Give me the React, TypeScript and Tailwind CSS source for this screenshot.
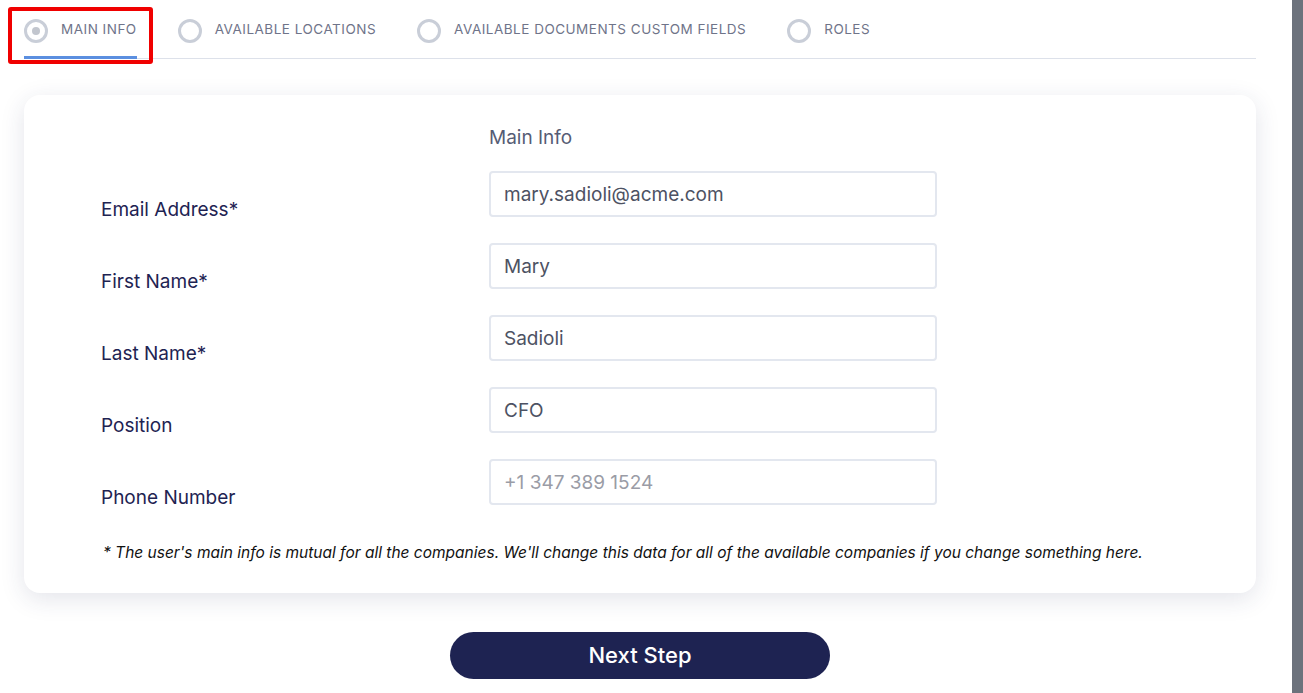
const tabs = [
  { label: 'Main Info', active: true },
  { label: 'Available Locations', active: false },
  { label: 'Available Documents Custom Fields', active: false },
  { label: 'Roles', active: false },
]

const fields = [
  { label: 'Email Address*', value: 'mary.sadioli@acme.com' },
  { label: 'First Name*', value: 'Mary' },
  { label: 'Last Name*', value: 'Sadioli' },
  { label: 'Position', value: 'CFO' },
  { label: 'Phone Number', value: '', placeholder: '+1 347 389 1524' },
]

export default function App() {
  return (
    <div className="flex h-screen overflow-hidden bg-white" style={{ fontFamily: "Inter, 'Noto Sans', sans-serif" }}>
      <main className="flex-1 pl-6 pr-9">

        {/* Steps */}
        <div className="flex gap-[41px] border-b border-[#dde1ea]">
          {tabs.map(tab => (
            <div key={tab.label}
              className={`relative -mb-px flex items-center gap-[13px] pt-[19px] pb-[13px] border-b-[3px] ${tab.active ? 'border-[#5b8fe0]' : 'border-transparent'}`}>
              <span className="flex h-6 w-6 items-center justify-center rounded-full border-[3px] border-[#c9ced8]">
                {tab.active && <span className="h-2 w-2 rounded-full bg-[#c2c6ce]" />}
              </span>
              <span className="-mt-[3px] text-[13.5px] uppercase tracking-[0.5px] text-[#6f7489]">{tab.label}</span>
              {tab.active && (
                <span className="pointer-events-none absolute -left-4 -right-4 top-[7px] h-[57px] rounded-[3px] border-4 border-[#f00000]" />
              )}
            </div>
          ))}
        </div>

        {/* Card */}
        <section className="mt-[36px] rounded-2xl bg-white pt-[31px] pb-[29px] shadow-[0_6px_24px_rgba(40,45,90,0.13)]">
          <div className="flex">
            <div className="w-[465px] shrink-0" />
            <h2 className="text-[19px] leading-[24px] text-[#565c75]">Main Info</h2>
          </div>

          <div className="mt-[21px] flex flex-col gap-[26px] pl-[77px]">
            {fields.map(f => (
              <div key={f.label} className="flex h-[46px]">
                <label className="h-[46px] w-[388px] shrink-0 pt-[27px] text-[19px] leading-[24px] text-[#1e2352]">{f.label}</label>
                <input
                  readOnly
                  value={f.value}
                  placeholder={f.placeholder}
                  className="h-[46px] w-[448px] rounded-[4px] border-2 border-[#e3e7ef] px-[13px] text-[19px] text-[#4d5263] outline-none placeholder:text-[#9a9ca6]"
                />
              </div>
            ))}
          </div>

          <p className="mt-[37px] pl-[79px] text-[15.5px] leading-[22px] italic text-[#111]">
            * The user's main info is mutual for all the companies. We'll change this data for all of the available companies if you change something here.
          </p>
        </section>

        <div className="mt-[39px] flex justify-center">
          <button className="h-[47px] w-[380px] rounded-full bg-[#1e2352] text-[22px] font-medium text-white">
            Next Step
          </button>
        </div>
      </main>

      <aside className="w-[11px] shrink-0 bg-[#6c727c]" />
    </div>
  )
}
